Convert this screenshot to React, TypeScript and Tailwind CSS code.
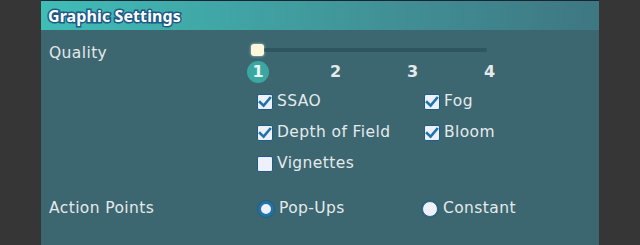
import React from "react";

const font = { fontFamily: "'DejaVu Sans', 'Noto Sans', sans-serif" };

function Check({ on, label }: { on: boolean; label: string }) {
    return (
        <div className="flex items-center gap-[4px] h-[31px]">
            <div className="shrink-0 w-[16px] h-[16px] rounded-[2px] bg-[#eef0fb] border border-[#1d5d86] flex items-center justify-center">
                {on && (
                    <svg width="14" height="14" viewBox="0 0 14 14">
                        <path d="M2 7.2 L5.6 10.6 L12 3" fill="none" stroke="#1f73a8" strokeWidth="2.6" strokeLinecap="square" />
                    </svg>
                )}
            </div>
            <span className="text-[15.5px] text-[#e4eaec] tracking-[0.4px]">{label}</span>
        </div>
    );
}

function Radio({ on, label }: { on: boolean; label: string }) {
    return (
        <div className="flex items-center gap-[5px]">
            {on ? (
                <div className="shrink-0 w-[16px] h-[16px] rounded-full bg-[#eef0fb] border-[3.5px] border-[#1f73a8] shadow-[0_0_0_1px_#2a5d78]" />
            ) : (
                <div className="shrink-0 w-[16px] h-[16px] rounded-full bg-[#eef0fb] border border-[#2a6a90] shadow-[0_0_0_1px_#2f5d72]" />
            )}
            <span className="text-[15.5px] text-[#e4eaec] tracking-[0.4px]">{label}</span>
        </div>
    );
}

export default function App() {
    return (
        <div className="w-[640px] h-[245px] bg-[#363636] px-[41px] overflow-hidden" style={font}>
            <div className="h-full flex flex-col bg-[#3c6670]">
                <div className="h-[1px] bg-[#1b2432]" />
                <div className="h-[29px] bg-gradient-to-r from-[#3fbdb7] to-[#3e7782] flex items-center pl-[7px]">
                    <span
                        className="text-[16px] font-bold text-white tracking-[0.1px]"
                        style={{ fontFamily: "'Noto Sans', sans-serif", WebkitTextStroke: "3px #1e5a86", paintOrder: "stroke fill" }}
                    >
                        Graphic Settings
                    </span>
                </div>
                <div className="flex pl-[8px] pt-[13px]">
                    <div className="w-[202px] text-[15.5px] text-[#e4eaec] tracking-[0.4px] leading-[20px]">Quality</div>
                    <div className="flex flex-col">
                        <div className="flex items-center h-[14px]">
                            <div className="w-[13px] h-[12px] rounded-[3px] bg-[#fff8dc] shadow-[0_0_3px_#b8d8c8]" />
                            <div className="w-[223px] h-[4px] bg-[#2f5560] rounded-[2px]" />
                        </div>
                        <div className="relative h-[24px] w-[250px] mt-[4px]">
                            <div className="absolute left-[-4px] top-[0px] w-[22px] h-[22px] rounded-full bg-[#3aa7a2] flex items-center justify-center text-[16px] font-bold text-[#e8f6f6]">1</div>
                            <div className="absolute left-[79px] top-[1px] h-[20px] flex items-center text-[16px] font-bold text-[#e4eaec]">2</div>
                            <div className="absolute left-[156px] top-[1px] h-[20px] flex items-center text-[16px] font-bold text-[#e4eaec]">3</div>
                            <div className="absolute left-[233px] top-[1px] h-[20px] flex items-center text-[16px] font-bold text-[#e4eaec]">4</div>
                        </div>
                    </div>
                </div>
                <div className="flex pl-[216px] pt-[1px]">
                    <div className="w-[167px] flex flex-col">
                        <Check on label="SSAO" />
                        <Check on label="Depth of Field" />
                        <Check on={false} label="Vignettes" />
                    </div>
                    <div className="flex flex-col">
                        <Check on label="Fog" />
                        <Check on label="Bloom" />
                    </div>
                </div>
                <div className="flex items-center pl-[8px] pt-[18px]">
                    <div className="w-[209px] text-[15.5px] text-[#e4eaec] tracking-[0.4px]">Action Points</div>
                    <div className="w-[164px]"><Radio on label="Pop-Ups" /></div>
                    <Radio on={false} label="Constant" />
                </div>
            </div>
        </div>
    );
}
